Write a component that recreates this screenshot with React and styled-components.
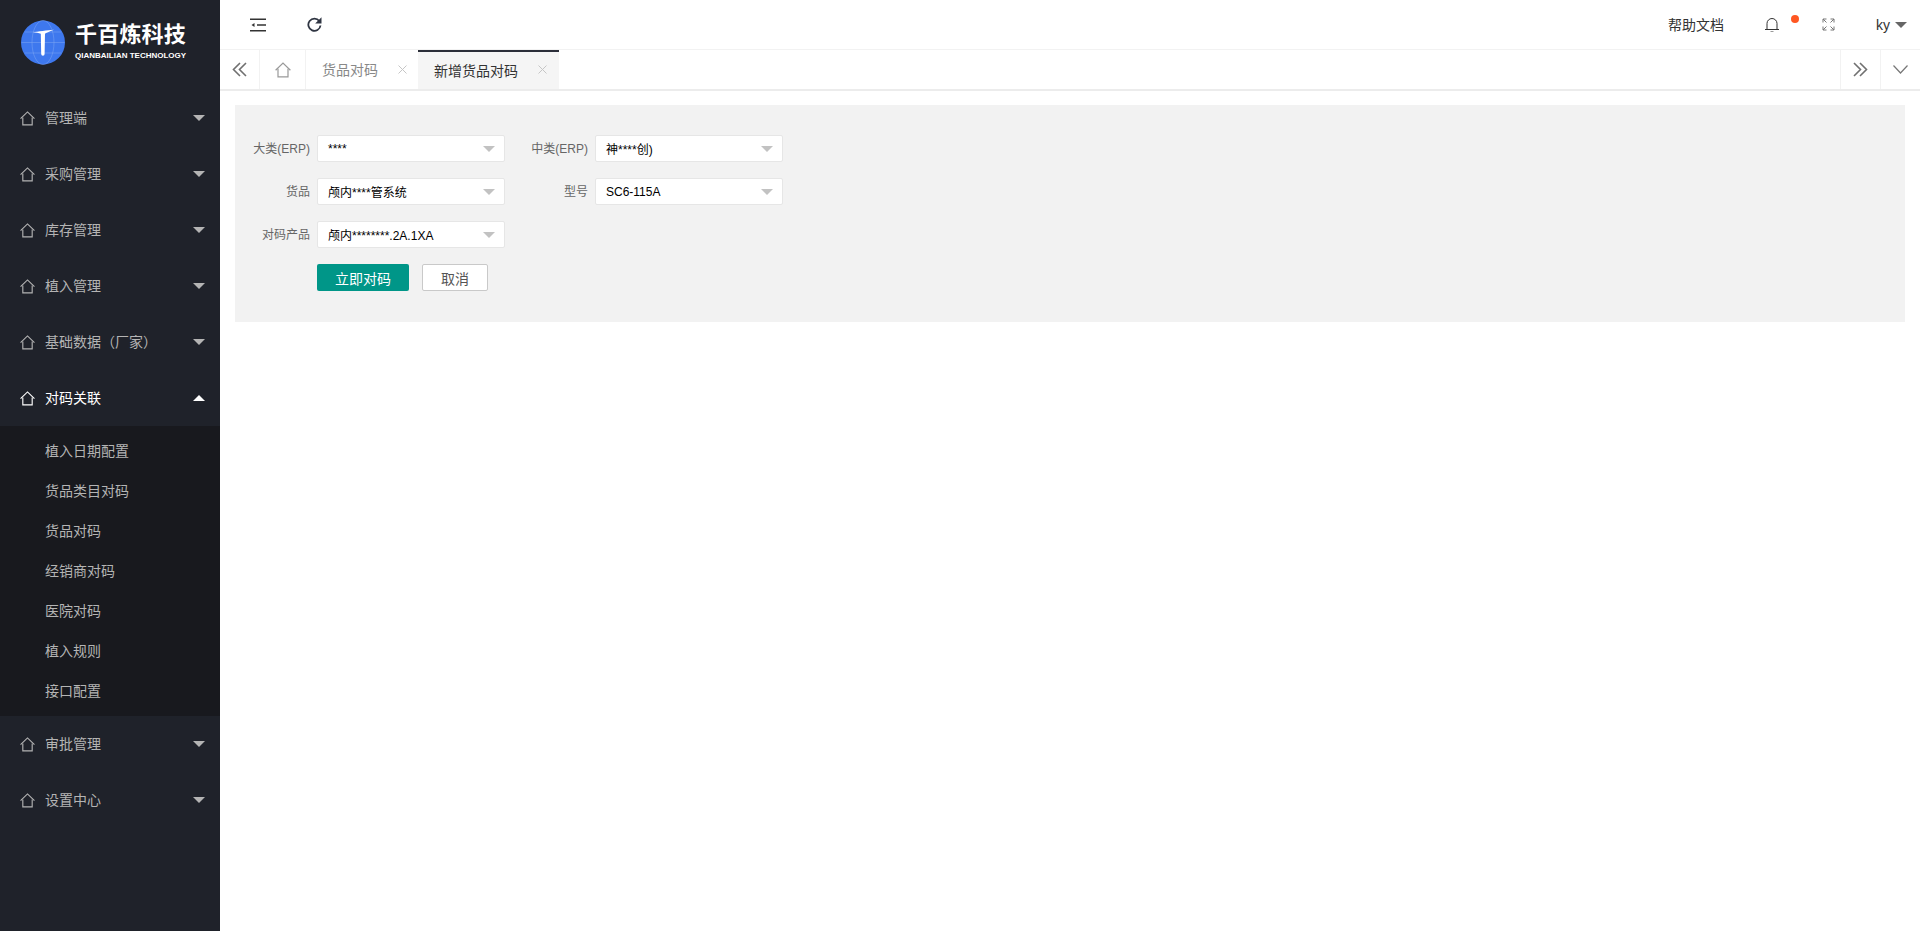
import styled, { createGlobalStyle } from "styled-components";

const GlobalStyle = createGlobalStyle`
  html, body {
    margin: 0;
    height: 100%;
    overflow: hidden;
    background: #fff;
  }
  body {
    font-family: "Liberation Sans", "Noto Sans CJK SC", sans-serif;
    font-size: 14px;
    color: #333;
  }
`;

const Layout = styled.div`
  display: flex;
  height: 931px;
`;

const Sidebar = styled.aside`
  width: 220px;
  flex-shrink: 0;
  background: #1f222a;
`;

const Logo = styled.div`
  height: 90px;
  box-sizing: border-box;
  padding: 20px 0 0 21px;
  display: flex;
  gap: 9px;
`;

const LogoText = styled.div`
  color: #fff;
  display: flex;
  flex-direction: column;
  width: 114px;
`;

const LogoTitle = styled.div`
  font-size: 22px;
  line-height: 26px;
  font-weight: 700;
  white-space: nowrap;
  letter-spacing: 0.2px;
  margin-top: 2px;
`;

const LogoSub = styled.div`
  font-size: 8px;
  line-height: 10px;
  font-weight: 700;
  white-space: nowrap;
  margin-top: 3px;
`;

const MenuItem = styled.div`
  height: 56px;
  display: flex;
  align-items: center;
  padding: 0 15px 0 20px;
  color: ${(props) => (props.$open ? "#fff" : "#b4b4b4")};
  svg {
    flex-shrink: 0;
  }
`;

const MenuLabel = styled.span`
  flex: 1;
  margin-left: 10px;
  padding-bottom: 2px;
`;

const Caret = styled.i`
  width: 0;
  height: 0;
  border-left: 6px solid transparent;
  border-right: 6px solid transparent;
  border-top: ${(props) => (props.$up ? "0" : `6px solid ${props.$color}`)};
  border-bottom: ${(props) => (props.$up ? `6px solid ${props.$color}` : "0")};
`;

const SubMenu = styled.div`
  background: #18191e;
  padding: 5px 0;
`;

const SubItem = styled.div`
  height: 40px;
  line-height: 40px;
  padding-left: 45px;
  color: #b4b4b4;
`;

const Main = styled.main`
  flex: 1;
  min-width: 0;
  display: flex;
  flex-direction: column;
`;

const Header = styled.header`
  height: 50px;
  box-sizing: border-box;
  border-bottom: 1px solid #f2f2f2;
  display: flex;
  align-items: center;
  padding: 0 13px 0 30px;
  color: #333;
`;

const HeaderLeft = styled.div`
  flex: 1;
  display: flex;
  align-items: center;
  gap: 41px;
`;

const HelpLink = styled.span`
  margin-right: 41px;
  padding-bottom: 2px;
`;

const BellWrap = styled.span`
  position: relative;
  display: flex;
  margin-right: 43px;
`;

const BellDot = styled.i`
  position: absolute;
  top: -2px;
  right: -20px;
  width: 8px;
  height: 8px;
  border-radius: 50%;
  background: #ff5722;
`;

const UserMenu = styled.span`
  display: flex;
  align-items: center;
  gap: 5px;
  margin-left: 41px;
`;

const TabBar = styled.div`
  height: 41px;
  box-sizing: border-box;
  display: flex;
  border-bottom: 2px solid #ececec;
`;

const TabCell = styled.div`
  width: ${(props) => props.$w}px;
  box-sizing: border-box;
  display: flex;
  align-items: center;
  justify-content: center;
  border-${(props) => (props.$left ? "left" : "right")}: 1px solid #f2f2f2;
  color: #777;
`;

const Tab = styled.div`
  box-sizing: border-box;
  height: 39px;
  display: flex;
  align-items: center;
  padding: 0 ${(props) => (props.$active ? "12px 2px" : "11px 1px")} 16px;
  gap: 20px;
  color: ${(props) => (props.$active ? "#333" : "#888")};
  background: ${(props) => (props.$active ? "#f5f5f5" : "transparent")};
  border-top: ${(props) => (props.$active ? "2px solid #2b2e39" : "0")};
`;

const TabClose = styled.span`
  width: 9px;
  height: 9px;
  display: flex;
  color: #c6c6c6;
`;

const TabSpacer = styled.div`
  flex: 1;
`;

const Content = styled.div`
  padding: 14px 15px;
`;

const FormPanel = styled.form`
  height: 217px;
  box-sizing: border-box;
  background: #f2f2f2;
  padding-top: 30px;
  font-size: 12px;
`;

const FormRow = styled.div`
  display: flex;
  height: 27px;
  margin-bottom: 16px;
`;

const FieldLabel = styled.label`
  width: ${(props) => props.$w}px;
  line-height: 28px;
  text-align: right;
  color: #666;
  margin-right: 7px;
  white-space: nowrap;
`;

const SelectBox = styled.div`
  width: 188px;
  height: 27px;
  box-sizing: border-box;
  background: #fff;
  border: 1px solid #e6e6e6;
  border-radius: 2px;
  display: flex;
  align-items: center;
  justify-content: space-between;
  padding: 0 9px 0 10px;
  color: #000;
`;

const ButtonRow = styled.div`
  display: flex;
  gap: 13px;
  padding-left: 82px;
`;

const PrimaryButton = styled.button`
  width: 92px;
  height: 27px;
  border: 0;
  border-radius: 2px;
  background: #009688;
  color: #fff;
  font: 14px "Liberation Sans", "Noto Sans CJK SC", sans-serif;
  padding: 0;
`;

const PlainButton = styled.button`
  width: 66px;
  height: 27px;
  box-sizing: border-box;
  border: 1px solid #c9c9c9;
  border-radius: 2px;
  background: #fff;
  color: #555;
  font: 14px "Liberation Sans", "Noto Sans CJK SC", sans-serif;
  padding: 0;
`;

const HomeIcon = ({ size = 15, color = "currentColor" }) => (
  <svg width={size} height={size} viewBox="0 0 16 16" fill="none" stroke={color} strokeWidth="1.2">
    <path d="M.6 8.2 8 1l7.4 7.2" />
    <path d="M3 6.8v8h10v-8" />
  </svg>
);

const Chevrons = ({ flip }) => (
  <svg width="15" height="15" viewBox="0 0 15 15" fill="none" stroke="#707070" strokeWidth="1.6">
    <path d={flip ? "M1 1l6.5 6.5L1 14M7 1l6.5 6.5L7 14" : "M14 1 7.5 7.5 14 14M8 1 1.5 7.5 8 14"} />
  </svg>
);

const LogoMark = () => (
  <svg width="45" height="45" viewBox="0 0 45 45" fill="none">
    <circle cx="22" cy="22.5" r="22" fill="#3e78ee" />
    <g stroke="#7fa6f3" strokeWidth="0.5">
      <ellipse cx="22" cy="22.5" rx="11" ry="22" />
      <path d="M.5 22.5h43M3.5 12h37M3.5 33h37" />
    </g>
    <path d="M12 12.5c5-1.4 14-2 21-2.8-5 2-8 3-9 4L23.6 34a1.7 1.7 0 0 1-3.4 0l-.4-20.3c-2-.8-5-1.2-7.8-1.2z" fill="#fff" />
  </svg>
);

const menuTop = ["管理端", "采购管理", "库存管理", "植入管理", "基础数据（厂家）"];
const subItems = ["植入日期配置", "货品类目对码", "货品对码", "经销商对码", "医院对码", "植入规则", "接口配置"];
const menuBottom = ["审批管理", "设置中心"];

const Menu = ({ label, open }) => (
  <MenuItem $open={open}>
    <HomeIcon />
    <MenuLabel>{label}</MenuLabel>
    <Caret $up={open} $color={open ? "#fff" : "#b4b4b4"} />
  </MenuItem>
);

const Select = ({ value }) => (
  <SelectBox>
    <span>{value}</span>
    <Caret $color="#c2c2c2" />
  </SelectBox>
);

const CloseIcon = () => (
  <TabClose>
    <svg width="9" height="9" viewBox="0 0 9 9" stroke="currentColor" strokeWidth="1">
      <path d="M.5.5l8 8M8.5.5l-8 8" />
    </svg>
  </TabClose>
);

export default function App() {
  return (
    <>
      <GlobalStyle />
      <Layout>
        <Sidebar>
          <Logo>
            <LogoMark />
            <LogoText>
              <LogoTitle>千百炼科技</LogoTitle>
              <LogoSub>QIANBAILIAN TECHNOLOGY</LogoSub>
            </LogoText>
          </Logo>
          {menuTop.map((label) => (
            <Menu key={label} label={label} />
          ))}
          <Menu label="对码关联" open />
          <SubMenu>
            {subItems.map((label) => (
              <SubItem key={label}>{label}</SubItem>
            ))}
          </SubMenu>
          {menuBottom.map((label) => (
            <Menu key={label} label={label} />
          ))}
        </Sidebar>
        <Main>
          <Header>
            <HeaderLeft>
              <svg width="16" height="14" viewBox="0 0 16 14" fill="none" stroke="#333" strokeWidth="1.4">
                <path d="M0 1.2h16M7 7h9M0 12.8h16" />
                <path d="M4.5 5 1.5 7l3 2z" fill="#333" stroke="none" />
              </svg>
              <svg width="15" height="15" viewBox="0 0 15 15" fill="none" stroke="#2f3542" strokeWidth="1.8">
                <path d="M12.3 4A6.1 6.1 0 1 0 13.5 8.5" />
                <path d="M14.5.2v6.3H8.2z" fill="#2f3542" stroke="none" />
              </svg>
            </HeaderLeft>
            <HelpLink>帮助文档</HelpLink>
            <BellWrap>
              <svg width="14" height="15" viewBox="0 0 14 15" fill="none" stroke="#333" strokeWidth="1">
                <path d="M0 12.5h14M2 12.5V6.500a5 5 0 0 1 10 0v6" />
                <path d="M5.5 14.5h3" stroke="#999" />
              </svg>
              <BellDot />
            </BellWrap>
            <svg width="13" height="13" viewBox="0 0 13 13" fill="none" stroke="#777" strokeWidth="1">
              <path d="M1 4.5V1h3.5M1 1l3.5 3.5M12 4.5V1H8.5M12 1 8.5 4.5M1 8.5V12h3.5M1 12l3.5-3.5M12 8.5V12H8.5M12 12 8.5 8.5" />
            </svg>
            <UserMenu>
              ky
              <Caret $color="#666" />
            </UserMenu>
          </Header>
          <TabBar>
            <TabCell $w={40}>
              <Chevrons />
            </TabCell>
            <TabCell $w={46}>
              <HomeIcon size={16} color="#999" />
            </TabCell>
            <Tab>
              货品对码
              <CloseIcon />
            </Tab>
            <Tab $active>
              新增货品对码
              <CloseIcon />
            </Tab>
            <TabSpacer />
            <TabCell $w={40} $left>
              <Chevrons flip />
            </TabCell>
            <TabCell $w={40} $left>
              <svg width="15" height="9" viewBox="0 0 15 9" fill="none" stroke="#777" strokeWidth="1.2">
                <path d="M.5.5 7.5 8l7-7.5" />
              </svg>
            </TabCell>
          </TabBar>
          <Content>
            <FormPanel>
              <FormRow>
                <FieldLabel $w={75}>大类(ERP)</FieldLabel>
                <Select value="****" />
                <FieldLabel $w={83}>中类(ERP)</FieldLabel>
                <Select value="神****创)" />
              </FormRow>
              <FormRow>
                <FieldLabel $w={75}>货品</FieldLabel>
                <Select value="颅内****管系统" />
                <FieldLabel $w={83}>型号</FieldLabel>
                <Select value="SC6-115A" />
              </FormRow>
              <FormRow>
                <FieldLabel $w={75}>对码产品</FieldLabel>
                <Select value="颅内********.2A.1XA" />
              </FormRow>
              <ButtonRow>
                <PrimaryButton type="button">立即对码</PrimaryButton>
                <PlainButton type="button">取消</PlainButton>
              </ButtonRow>
            </FormPanel>
          </Content>
        </Main>
      </Layout>
    </>
  );
}
